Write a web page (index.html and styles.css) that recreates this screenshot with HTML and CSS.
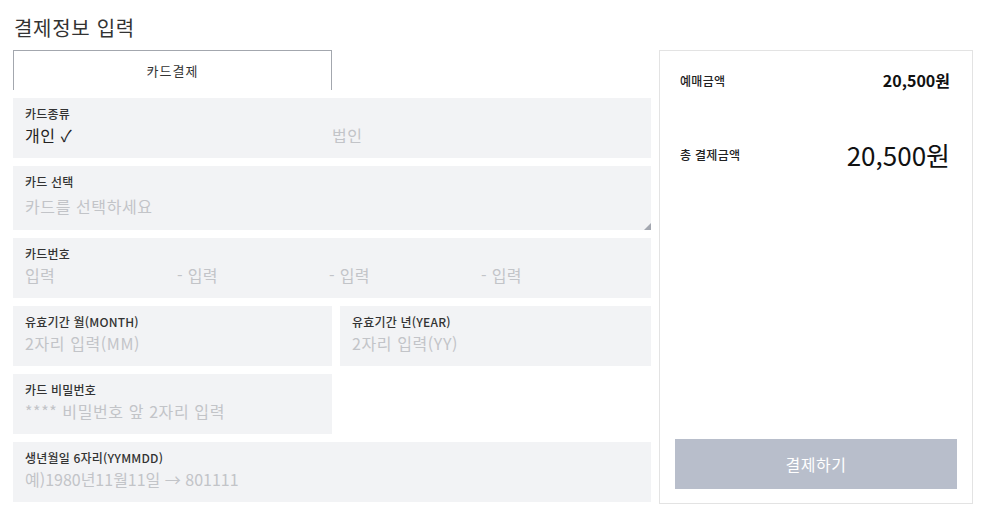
FILE: index.html
```html
<!DOCTYPE html>
<html lang="ko">
<head>
<meta charset="utf-8">
<link rel="stylesheet" href="styles.css">
</head>
<body>
<div class="page">
  <h1 class="title">결제정보 입력</h1>
  <div class="layout">
    <div class="form">
      <div class="tabs"><div class="tab">카드결제</div></div>
      <div class="field">
        <div class="label">카드종류</div>
        <div class="choices">
          <span class="value">개인 ✓</span>
          <span class="ph">법인</span>
        </div>
      </div>
      <div class="field tall">
        <div class="label">카드 선택</div>
        <div class="ph">카드를 선택하세요</div>
        <span class="grip"></span>
      </div>
      <div class="field">
        <div class="label">카드번호</div>
        <div class="cardnum">
          <span class="ph">입력</span>
          <span class="ph">- 입력</span>
          <span class="ph">- 입력</span>
          <span class="ph">- 입력</span>
        </div>
      </div>
      <div class="pair">
        <div class="field">
          <div class="label">유효기간 월(MONTH)</div>
          <div class="ph">2자리 입력(MM)</div>
        </div>
        <div class="field">
          <div class="label">유효기간 년(YEAR)</div>
          <div class="ph">2자리 입력(YY)</div>
        </div>
      </div>
      <div class="pair">
        <div class="field">
          <div class="label">카드 비밀번호</div>
          <div class="ph">**** 비밀번호 앞 2자리 입력</div>
        </div>
        <div></div>
      </div>
      <div class="field">
        <div class="label">생년월일 6자리(YYMMDD)</div>
        <div class="ph tight">예)1980년11월11일 → 801111</div>
      </div>
    </div>
    <aside class="summary">
      <div class="sum-row">
        <span class="sum-label">예매금액</span>
        <span class="sum-amt">20,500원</span>
      </div>
      <div class="sum-row total">
        <span class="sum-label">총 결제금액</span>
        <span class="sum-total">20,500원</span>
      </div>
      <button class="pay" type="button">결제하기</button>
    </aside>
  </div>
</div>
</body>
</html>
```

FILE: styles.css
```css
* { box-sizing: border-box; }
html, body { margin: 0; padding: 0; background: #fff; }
body {
  font-family: "Noto Sans CJK KR", "Noto Sans", "Liberation Sans", sans-serif;
  color: #222;
}
.page { padding: 14px 0 0 13px; width: 995px; }
.title {
  margin: 0 0 8px 1px;
  font-size: 20px;
  font-weight: 400;
  line-height: 28px;
  color: #333;
  letter-spacing: 0.7px;
}
.layout { display: flex; gap: 8px; align-items: flex-start; }
.form { width: 638px; display: flex; flex-direction: column; gap: 8px; }
.tabs { display: flex; }
.tab {
  width: 319px;
  height: 40px;
  border: 1px solid #a3a7ae;
  border-bottom: none;
  text-align: center;
  font-size: 13px;
  letter-spacing: 1px;
  line-height: 40px;
  color: #333;
}
.field {
  position: relative;
  background: #f2f3f5;
  height: 60px;
  padding: 7px 12px 0 12px;
}
.field.tall { height: 64px; }
.label {
  font-size: 12px;
  font-weight: 500;
  line-height: 17px;
  color: #333;
  letter-spacing: 0.2px;
}
.value, .ph {
  font-size: 16px;
  line-height: 24px;
  margin-top: 1px;
  letter-spacing: 0.6px;
}
.field.tall .ph { margin-top: 4px; }
.value { color: #222; }
.ph { color: #c2c4c8; }
.ph.tight { letter-spacing: 0; }
.choices { display: grid; grid-template-columns: 307px 1fr; }
.cardnum { display: grid; grid-template-columns: repeat(4, 152px); }
.cardnum .ph { letter-spacing: 0.3px; }
.grip {
  position: absolute;
  right: 0;
  bottom: 0;
  width: 0;
  height: 0;
  border-left: 7px solid transparent;
  border-bottom: 7px solid #a3a7b0;
}
.pair { display: grid; grid-template-columns: 319px 311px; gap: 8px; }
.summary {
  width: 314px;
  height: 454px;
  border: 1px solid #e3e3e3;
  padding: 18px 15px 14px 15px;
  display: flex;
  flex-direction: column;
}
.sum-row {
  display: flex;
  justify-content: space-between;
  align-items: center;
  padding: 0 7px 0 5px;
  height: 22px;
}
.sum-row.total { margin-top: 44px; height: 38px; }
.sum-label { font-size: 12px; font-weight: 500; color: #222; letter-spacing: 0.3px; }
.sum-amt { font-size: 16px; font-weight: 700; color: #111; }
.sum-total { font-size: 26px; font-weight: 400; color: #111; }
.pay {
  margin-top: auto;
  height: 50px;
  width: 100%;
  border: none;
  background: #b8becb;
  color: #fff;
  font-family: inherit;
  font-size: 16px;
  letter-spacing: 0.5px;
  cursor: pointer;
}
```
